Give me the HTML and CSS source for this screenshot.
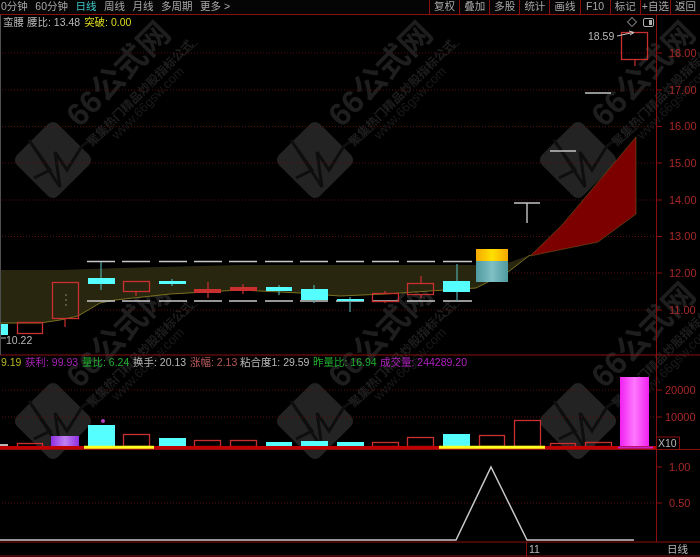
FILE: index.html
```html
<!DOCTYPE html>
<html lang="zh">
<head>
<meta charset="utf-8">
<title>蛮腰</title>
<link rel="stylesheet" href="styles.css">
</head>
<body>
<div class="screen">
  <header class="toolbar">
    <nav class="periods">
      <span class="period">0分钟</span>
      <span class="period">60分钟</span>
      <span class="period active">日线</span>
      <span class="period">周线</span>
      <span class="period">月线</span>
      <span class="period">多周期</span>
      <span class="period">更多 &gt;</span>
    </nav>
    <div class="tools">
      <span class="tool">复权</span><span class="tool">叠加</span><span class="tool">多股</span><span class="tool">统计</span><span class="tool">画线</span><span class="tool">F10</span><span class="tool">标记</span><span class="tool">+自选</span><span class="tool">返回</span>
    </div>
  </header>
  <svg class="chart" width="700" height="542" viewBox="0 15 700 542" xmlns="http://www.w3.org/2000/svg">
    <defs>
      <linearGradient id="gold" x1="0" x2="1" y1="0" y2="0"><stop offset="0" stop-color="#f5a800"/><stop offset=".5" stop-color="#ffe000"/><stop offset="1" stop-color="#f5a800"/></linearGradient>
      <linearGradient id="teal" x1="0" x2="1" y1="0" y2="0"><stop offset="0" stop-color="#4f9aa0"/><stop offset=".5" stop-color="#7fc0c4"/><stop offset="1" stop-color="#4f9aa0"/></linearGradient>
      <linearGradient id="mag" x1="0" x2="1" y1="0" y2="0"><stop offset="0" stop-color="#f020f0"/><stop offset=".5" stop-color="#ff78ff"/><stop offset="1" stop-color="#f020f0"/></linearGradient>
      <linearGradient id="pur" x1="0" x2="1" y1="0" y2="0"><stop offset="0" stop-color="#9030e0"/><stop offset=".5" stop-color="#c080f0"/><stop offset="1" stop-color="#9030e0"/></linearGradient>
      <g id="mark">
        <rect class="wm-box" x="-29" y="-29" width="58" height="58" rx="7" transform="rotate(-45)"/>
        <path class="wm-pulse" d="M-19 18 L-3 10 L-24 -20 L7 27 L2 -8 L14 10 L29 -14 L40 -22"/>
        <g transform="translate(73 -78) rotate(-45)"><text class="wm-big" text-anchor="middle">66公式网</text></g>
        <g transform="translate(90 -64) rotate(-45)"><text class="wm-mid" text-anchor="middle">聚集热门精品炒股指标公式</text></g>
        <g transform="translate(98 -54) rotate(-45)"><text class="wm-url" text-anchor="middle">www.66gsw.com</text></g>
        <path class="wm-line" d="M43 -17 L60 -32 M132 -105 L145 -117"/>
      </g>
    </defs>

    <use href="#mark" x="53" y="160"/>
    <use href="#mark" x="315" y="160"/>
    <use href="#mark" x="578" y="160"/>
    <use href="#mark" x="53" y="421"/>
    <use href="#mark" x="315" y="421"/>
    <use href="#mark" x="578" y="421"/>

    <path class="grid" d="M2 53H656M2 90H656M2 126.5H656M2 163H656M2 200H656M2 236.5H656M2 273H656M2 310H656M2 390H656M2 417H656M2 503H656"/>

    <polygon class="band" points="0,270 60,270 120,268 240,265 476,265 508,263 530,255 508,272 476,288 430,291 385,294 340,296 300,293 240,290 170,294 115,300 100,303 78,316 60,320 40,323 0,323"/>
    <polyline class="band-edge" points="0,323 40,323 60,320 78,316 100,303 115,300 170,294 240,290 300,293 340,296 385,294 430,291 476,288 508,272 530,255"/>
    <polygon class="cloud" points="530,256 562,225 636,137 636,214 598,242"/>

    <path class="dash" d="M87 261.5H115M122 261.5H150M159 261.5H187M194 261.5H222M229 261.5H257M265 261.5H293M300 261.5H328M336 261.5H364M372 261.5H399M407 261.5H435M443 261.5H472M87 301H115M122 301H150M159 301H187M194 301H222M229 301H257M265 301H293M300 301H328M336 301H364M372 301H399M407 301H435M443 301H472"/>

    <path class="wick-r" d="M65 318V327M136 291V296M208 282V298M243 284V294M385 291V293M385 301V303M421 276V283M421 294V298M635 59V66"/>
    <path class="wick-c" d="M101 262V290M172 279V286M279 285V295M314 285V303M350 297V312M457 264V301"/>
    <path class="wick-w" d="M527 203V223"/>

    <rect class="up" x="17.5" y="322.5" width="25" height="11"/>
    <rect class="up" x="52.5" y="282.5" width="26" height="36"/>
    <rect class="up" x="123.5" y="281.5" width="26" height="10"/>
    <rect class="up-fill" x="194.5" y="289.5" width="26" height="3"/>
    <rect class="up-fill" x="230.5" y="287.5" width="26" height="3"/>
    <rect class="up" x="372.5" y="293.5" width="26" height="8"/>
    <rect class="up" x="407.5" y="283.5" width="26" height="11"/>
    <rect class="up" x="621.5" y="32.5" width="26" height="27"/>
    <circle class="seed" cx="66" cy="295" r="1"/><circle class="seed" cx="66" cy="300" r="1"/><circle class="seed" cx="66" cy="305" r="1"/>

    <rect class="down" x="0" y="324" width="8" height="11"/>
    <rect class="down" x="88" y="278" width="27" height="6"/>
    <rect class="down" x="159" y="281" width="27" height="3"/>
    <rect class="down" x="266" y="287" width="26" height="4"/>
    <rect class="down" x="301" y="289" width="27" height="11"/>
    <rect class="down" x="337" y="299" width="27" height="2"/>
    <rect class="down" x="443" y="281" width="27" height="11"/>

    <rect x="476" y="249" width="32" height="12" fill="url(#gold)"/>
    <rect x="476" y="261" width="32" height="21" fill="url(#teal)"/>

    <path class="flat" d="M514 203H540M550 151H576M585 93H611"/>
    <path class="flat-thin" d="M1 338H6"/>

    <text class="t gray" x="588" y="40">18.59</text>
    <path class="arrow" d="M617 36L633 32.5M629 31L634 32.5L630 35"/>
    <text class="t gray" x="6" y="344">10.22</text>

    <path class="icon" d="M632 17.5L636.5 22L632 26.5L627.5 22Z"/>
    <rect class="icon" x="643.5" y="18.5" width="10" height="8" rx="1.5"/>
    <rect class="icon-fill" x="649" y="20" width="3" height="5"/>

    <text class="t" x="3" y="26"><tspan class="gray">蛮腰</tspan><tspan class="gray" dx="3">腰比: 13.48</tspan><tspan class="yellow" dx="4">突破: 0.00</tspan></text>

    <text class="t" x="1" y="366"><tspan class="olive">9.19</tspan></text>
    <text class="t purple" x="25" y="366">获利: 99.93</text>
    <text class="t green" x="82" y="366">量比: 6.24</text>
    <text class="t gray" x="133" y="366">换手: 20.13</text>
    <text class="t pink" x="190" y="366">涨幅: 2.13</text>
    <text class="t gray" x="240" y="366">粘合度1: 29.59</text>
    <text class="t green" x="313" y="366">昨量比: 16.94</text>
    <text class="t magenta" x="380" y="366">成交量: 244289.20</text>

    <rect class="v-flat" x="0" y="444" width="8" height="2"/>
    <rect class="up" x="17.5" y="443.5" width="25" height="4"/>
    <rect x="51" y="436" width="28" height="10" fill="url(#pur)"/>
    <rect class="down" x="88" y="425" width="27" height="21"/>
    <circle class="dot" cx="103" cy="421" r="2"/>
    <rect class="up" x="123.5" y="434.5" width="26" height="12"/>
    <rect class="down" x="159" y="438" width="27" height="8"/>
    <rect class="up" x="194.5" y="440.5" width="26" height="6"/>
    <rect class="up" x="230.5" y="440.5" width="26" height="6"/>
    <rect class="down" x="266" y="442" width="26" height="4"/>
    <rect class="down" x="301" y="441" width="27" height="5"/>
    <rect class="down" x="337" y="442" width="27" height="4"/>
    <rect class="up" x="372.5" y="442.5" width="26" height="4"/>
    <rect class="up" x="407.5" y="437.5" width="26" height="9"/>
    <rect class="down" x="443" y="434" width="27" height="12"/>
    <rect class="up" x="479.5" y="435.5" width="25" height="11"/>
    <rect class="up" x="514.5" y="420.5" width="26" height="26"/>
    <rect class="up" x="550.5" y="443.5" width="25" height="3"/>
    <rect class="up" x="585.5" y="442.5" width="26" height="4"/>
    <rect x="620" y="377" width="29" height="70" fill="url(#mag)"/>

    <path class="base" d="M0 447.5H656"/>
    <path class="rule" d="M0 355H700M0 449.5H700M0 542H700M0 556H700M656.5 15V542M526.5 542V557M679.5 437V449M656 437H680"/>
    <path class="base-y" d="M84 447.3H154M439 447.3H545"/>
    <path class="base-m" d="M618 447.5H653"/>

    <polyline class="line" points="0,540 456,540 491,467 527,540 634,540"/>

    <path class="rule-left" d="M0.5 15V355"/>
    <path class="tick" d="M656 53H662M656 90H662M656 126.5H662M656 163H662M656 200H662M656 236.5H662M656 273H662M656 310H662M656 390H662M656 417H662M656 467H662M656 503H662"/>

    <g class="axis">
      <text x="669" y="57">18.00</text>
      <text x="669" y="94">17.00</text>
      <text x="669" y="130">16.00</text>
      <text x="669" y="167">15.00</text>
      <text x="669" y="204">14.00</text>
      <text x="669" y="240">13.00</text>
      <text x="669" y="277">12.00</text>
      <text x="669" y="314">11.00</text>
      <text x="665" y="394">20000</text>
      <text x="665" y="421">10000</text>
      <text x="669" y="471">1.00</text>
      <text x="669" y="507">0.50</text>
    </g>
    <text class="t gray" x="658" y="447">X10</text>
    <text class="t gray" x="529" y="553">11</text>
    <text class="t gray" x="667" y="553">日线</text>
  </svg>
</div>
</body>
</html>
```
FILE: styles.css
```css
html, body {
  margin: 0;
  padding: 0;
  background: #000;
}

.screen {
  width: 700px;
  height: 557px;
  overflow: hidden;
  display: flex;
  flex-direction: column;
  background: #000;
  font-family: "Liberation Sans", "Noto Sans CJK SC", sans-serif;
  font-size: 10.5px;
  filter: blur(0.45px);
}

.toolbar {
  height: 14px;
  flex: none;
  display: flex;
  justify-content: space-between;
  border-bottom: 1px solid #8b0f0f;
  color: #a8a8a8;
  line-height: 13px;
  background: #050505;
}

.periods {
  display: flex;
  gap: 7.5px;
  margin-left: 1px;
}

.period {
  white-space: nowrap;
}

.period.active {
  color: #3fc8c8;
}

.tools {
  display: flex;
  width: 271px;
}

.tool {
  flex: 1;
  text-align: center;
  border-left: 1px solid #8b0f0f;
  white-space: nowrap;
}

.chart {
  display: block;
  flex: none;
}

.t {
  font-family: "Liberation Sans", "Noto Sans CJK SC", sans-serif;
  font-size: 10.5px;
}

.gray { fill: #b8b8b8; }
.yellow { fill: #dcdc20; }
.olive { fill: #b8b820; }
.purple { fill: #a820b8; }
.green { fill: #20b030; }
.pink { fill: #b85858; }
.magenta { fill: #b020c0; }

.axis {
  fill: #a82828;
  font-family: "Liberation Sans", sans-serif;
  font-size: 11px;
}

.grid {
  fill: none;
  stroke: #5c0c10;
  stroke-width: 1;
  stroke-dasharray: 1 2;
}

.band { fill: #29260f; }
.band-edge { fill: none; stroke: #7a7020; stroke-width: 1; }
.cloud { fill: #7c0000; stroke: #7a6a20; stroke-width: 0.5; }

.dash { stroke: #c8c8c8; stroke-width: 1.5; fill: none; }
.flat { stroke: #c4c4c4; stroke-width: 1.5; fill: none; }
.flat-thin { stroke: #b4b4b4; stroke-width: 1; fill: none; }

.wick-r { stroke: #c83030; stroke-width: 1.2; fill: none; }
.wick-c { stroke: #4fa8a8; stroke-width: 1.2; fill: none; }
.wick-w { stroke: #b8b8b8; stroke-width: 1.5; fill: none; }

.up { fill: none; stroke: #c83030; stroke-width: 1.3; }
.up-fill { fill: #c83030; stroke: #c83030; stroke-width: 1; }
.down { fill: #55ffff; }
.seed { fill: #6a6a50; }
.dot { fill: #b040c0; }
.v-flat { fill: #b8b8b8; }

.arrow { fill: none; stroke: #c8c8c8; stroke-width: 1; }
.icon { fill: none; stroke: #b0b0b0; stroke-width: 1; }
.icon-fill { fill: #b0b0b0; }

.base { stroke: #c00000; stroke-width: 3; fill: none; }
.base-y { stroke: #ffff20; stroke-width: 3; fill: none; }
.base-m { stroke: #c020d0; stroke-width: 2; fill: none; }

.line { fill: none; stroke: #c8c8c8; stroke-width: 1.5; }

.rule { fill: none; stroke: #8b0f0f; stroke-width: 1; }
.rule-left { fill: none; stroke: #505050; stroke-width: 1; }
.tick { fill: none; stroke: #8b0f0f; stroke-width: 1; }

.wm-box { fill: #232323; }
.wm-pulse { fill: none; stroke: #0e0e0e; stroke-width: 3; stroke-linejoin: miter; }
.wm-big {
  fill: #1e1e1e;
  font-family: "Liberation Sans", "Noto Sans CJK SC", sans-serif;
  font-size: 32px;
  font-weight: 700;
}
.wm-mid {
  fill: #1e1e1e;
  font-family: "Noto Sans CJK SC", sans-serif;
  font-size: 12px;
  font-weight: 700;
}
.wm-url {
  fill: #1a1a1a;
  font-family: "Liberation Sans", sans-serif;
  font-size: 13px;
}
.wm-line { fill: none; stroke: #1e1e1e; stroke-width: 1; }
```
